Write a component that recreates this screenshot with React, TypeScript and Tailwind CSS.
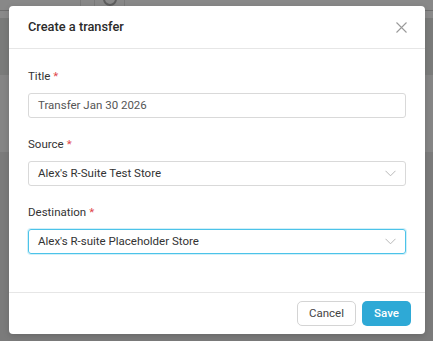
import React from "react";

const font = { fontFamily: "Roboto, 'Liberation Sans', sans-serif" };

function Chevron() {
  return (
    <svg width="11" height="7" viewBox="0 0 11 7" fill="none" className="shrink-0">
      <path d="M0.5 0.8 L5.5 5.8 L10.5 0.8" stroke="#b8b8b8" strokeWidth="1" />
    </svg>
  );
}

function Label({ text }: { text: string }) {
  return (
    <div className="h-[16px] flex items-center text-[11.5px] leading-[16px] text-[#333]">
      {text}
      <span className="text-[#e0474c] ml-[3px]">*</span>
    </div>
  );
}

export default function App() {
  return (
    <div className="w-[433px] h-[341px] relative overflow-hidden bg-[#7b7b7b]" style={font}>
      {/* background page under overlay */}
      <div className="flex flex-col">
        <div className="h-[10px] bg-[#888888] flex">
          <div className="w-[81px] border-r border-[#7a7a7a]" />
          <div className="w-[14px] border-r border-[#7a7a7a]" />
          <div className="w-[30px] border-r border-[#7a7a7a] flex justify-center">
            <div className="w-[14px] h-[14px] rounded-full border-2 border-[#5e5e5e] -mt-[8px]" />
          </div>
        </div>
        <div className="h-[1px] bg-[#6e6e6e]" />
        <div className="h-[7px] bg-[#8a8a8a]" />
        <div className="h-[57px] bg-[#7a7b7a]" />
        <div className="h-[77px] bg-[#858585]" />
        <div className="h-[189px] bg-[#7b7b7b]" />
      </div>

      {/* modal */}
      <div className="absolute left-[9px] top-[6px] w-[416px] h-[328px] bg-white rounded-[4px] flex flex-col shadow-[0_2px_6px_rgba(0,0,0,0.15)]">
        <div className="h-[43px] shrink-0 pl-[19px] pr-[18px] flex items-center justify-between border-b border-[#e6e6e6]">
          <div className="text-[12.8px] font-medium text-[#2b2b2b]">Create a transfer</div>
          <svg width="11" height="11" viewBox="0 0 11 11">
            <path d="M0.5 0.5 L10.5 10.5 M10.5 0.5 L0.5 10.5" stroke="#9a9a9a" strokeWidth="1.1" />
          </svg>
        </div>

        <div className="flex-1 px-[19px] pt-[19px] flex flex-col">
          <Label text="Title" />
          <div className="mt-[9px] h-[25px] rounded-[3px] border border-[#d9d9d9] px-[9px] flex items-center text-[11.5px] text-[#555]">
            Transfer Jan 30 2026
          </div>

          <div className="mt-[18px]">
            <Label text="Source" />
          </div>
          <div className="mt-[9px] h-[25px] rounded-[3px] border border-[#d9d9d9] pl-[9px] pr-[9px] flex items-center justify-between text-[11.5px] text-[#333]">
            <span>Alex's R-Suite Test Store</span>
            <Chevron />
          </div>

          <div className="mt-[18px]">
            <Label text="Destination" />
          </div>
          <div className="mt-[9px] h-[25px] rounded-[3px] border border-[#4cc3e9] shadow-[0_0_0_1px_rgba(76,195,233,0.25)] pl-[9px] pr-[9px] flex items-center justify-between text-[11.5px] text-[#333]">
            <span>Alex's R-suite Placeholder Store</span>
            <Chevron />
          </div>
        </div>

        <div className="h-[42px] shrink-0 border-t border-[#e6e6e6] flex items-center justify-end pr-[14px] gap-[6px]">
          <button className="w-[59px] h-[25px] rounded-[5px] border border-[#d4d4d4] bg-white text-[11.5px] text-[#444]">
            Cancel
          </button>
          <button className="w-[49px] h-[25px] rounded-[5px] bg-[#2ea9d6] text-[11.5px] font-medium text-white">
            Save
          </button>
        </div>
      </div>
    </div>
  );
}
